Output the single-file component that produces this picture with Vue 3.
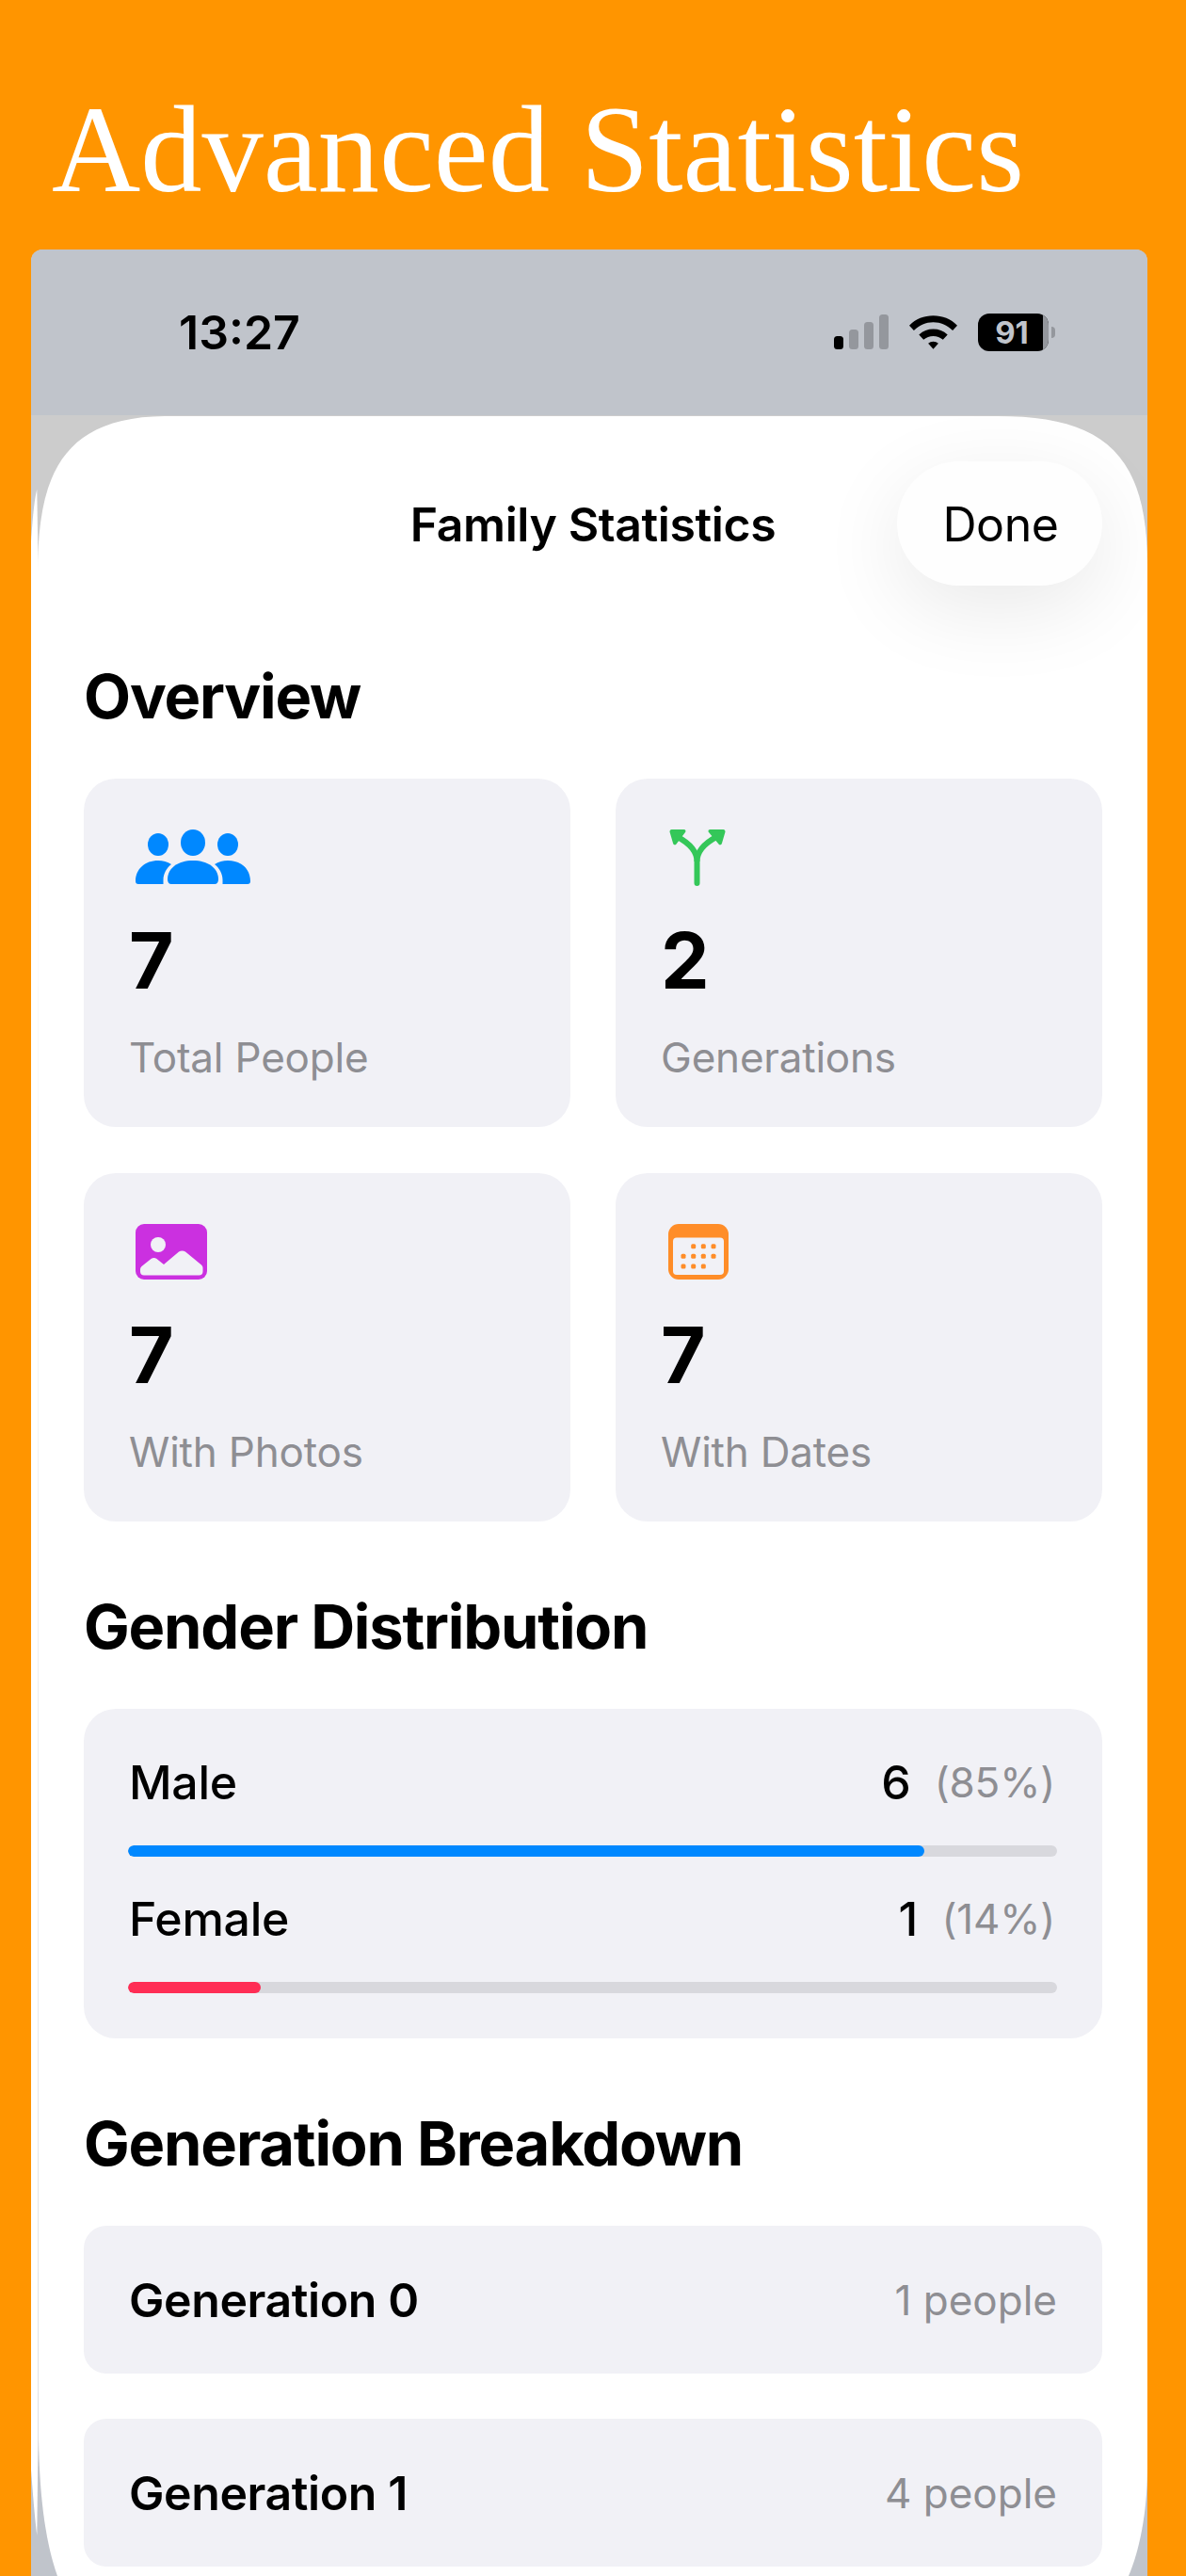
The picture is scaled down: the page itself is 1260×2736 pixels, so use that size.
<template>
  <div class="page">
    <h1 class="title">Advanced Statistics</h1>
    <div class="phone">
      <div class="status">
        <span class="time">13:27</span>
        <div class="status_icons">
          <svg width="58" height="38" viewBox="0 0 58 38">
            <rect x="0" y="23" width="10" height="14" rx="3.5" fill="#000" />
            <rect x="16" y="16" width="10" height="21" rx="3.5" fill="#94979d" />
            <rect x="32" y="8" width="10" height="29" rx="3.5" fill="#94979d" />
            <rect x="48" y="0" width="10" height="37" rx="3.5" fill="#94979d" />
          </svg>
          <svg width="51" height="38" viewBox="0 0 52 38">
            <path d="M0 11.5C7 4.5 16 1 26 1s19 3.5 26 10.5l-5 5.5C41 11 34 8 26 8S11 11 5 17z" fill="#000" />
            <path d="M10.5 21.5C15 17.5 20 15.5 26 15.5s11 2 15.5 6l-5 5.5C33.5 24.5 30 23 26 23s-7.5 1.500-10.500 4z" fill="#000" />
            <path d="M20.5 31C22 29.800 24 29 26 29s4 .8 5.5 2L26 37z" fill="#000" />
          </svg>
          <div class="battery">
            <div class="battery_body">
              <span class="battery_level">91</span>
              <span class="battery_rest"></span>
            </div>
            <span class="battery_cap"></span>
          </div>
        </div>
      </div>

      <!-- sheet outline, with the doubled edge on the left -->
      <svg class="sheet_shape" width="1186" height="2471" viewBox="33 265 1186 2471">
        <path
          d="M40 610C40 510 62 443 175 442H1060C1170 442 1219 480 1219 600V2620C1219 2670 1210 2710 1199 2736H61C50 2705 42 2660 41 2590z"
          fill="#fff"
        />
        <path d="M39.3 520C37 528 35 545 33 575V2623C35 2650 37 2675 39.3 2693L40.5 2590V600z" fill="#fff" />
      </svg>

      <div class="sheet">
        <div class="sheet_head">
          <span class="sheet_title">Family Statistics</span>
          <button class="done">Done</button>
        </div>

        <h2 class="section first">Overview</h2>
        <div class="stat_grid">
          <div class="stat_card" v-for="item in stats" :key="item.label">
            <div class="stat_icon">
              <svg v-if="item.icon === 'people'" width="122" height="58" viewBox="0 0 122 58">
                <ellipse cx="24" cy="16" rx="11" ry="12" fill="#0088ff" />
                <ellipse cx="98" cy="16" rx="11" ry="12" fill="#0088ff" />
                <path d="M0 55C0 42 10 33 24 33c5 0 10 1.2 14 4-5 4-8.5 10-8.5 16.5V58H3c-2 0-3-1-3-3z" fill="#0088ff" />
                <path d="M122 55c0-13-10-22-24-22-5 0-10 1.2-14 4 5 4 8.5 10 8.5 16.5V58H119c2 0 3-1 3-3z" fill="#0088ff" />
                <ellipse cx="61" cy="14" rx="13" ry="14" fill="#0088ff" />
                <path d="M34 53c0-12 11-20 27-20s27 8 27 20c0 3-1.5 5-4 5H38c-2.5 0-4-2-4-5z" fill="#0088ff" />
              </svg>
              <svg v-else-if="item.icon === 'branch'" class="ic_branch" width="60" height="60" viewBox="0 0 60 60">
                <path d="M29.5 57V34C29.5 24 22 15 9 8" fill="none" stroke="#34c759" stroke-width="6" stroke-linecap="round" />
                <path d="M29.5 34C29.5 24 37 15 50 8" fill="none" stroke="#34c759" stroke-width="6" />
                <path d="M0.5 2.5c0-1.500.8-2.500 2-2.500h13c2 0 2.500 2 1.500 3L7.500 15.500c-1 1.500-3 1-3.500-1z" fill="#34c759" />
                <path d="M59.5 2.5c0-1.500-.8-2.500-2-2.500h-14c-2 0-2.500 2-1.500 3L52.500 15.500c1 1.500 3 1 3.500-1z" fill="#34c759" />
              </svg>
              <svg v-else-if="item.icon === 'photo'" width="76" height="59" viewBox="0 0 76 59">
                <rect width="76" height="59" rx="9" fill="#cb30e0" />
                <circle cx="24" cy="22" r="8" fill="#f1f1f6" />
                <path d="M5 48c0-1 .5-2 1.5-3l10-8c2-1.5 4-1.5 6 0l7.5 6 16-13.5c2-1.500 5-1.500 7 0l17 14c1 1 1.5 2 1.5 3v4c0 2.5-1.5 4-4 4H9c-2.5 0-4-1.5-4-4z" fill="#f1f1f6" />
              </svg>
              <svg v-else class="ic_cal" width="64" height="59" viewBox="0 0 64 59">
                <rect width="64" height="59" rx="11" fill="#ff8d28" />
                <rect x="5" y="14.5" width="54" height="39.5" rx="4" fill="#f1f1f6" />
                <g fill="#ff8d28">
                  <rect v-for="(d, i) in calendarDots" :key="i" :x="d[0]" :y="d[1]" width="5" height="5" rx="1.5" />
                </g>
              </svg>
            </div>
            <div class="stat_value">{{ item.value }}</div>
            <div class="stat_label">{{ item.label }}</div>
          </div>
        </div>

        <h2 class="section">Gender Distribution</h2>
        <div class="gender_card">
          <div class="gender" v-for="g in genders" :key="g.name">
            <div class="gender_row">
              <span class="gender_name">{{ g.name }}</span>
              <span class="gender_count">{{ g.count }}</span>
              <span class="gender_pct">({{ g.pct }}%)</span>
            </div>
            <div class="track">
              <div class="fill" :style="{ width: g.bar + '%', background: g.color }"></div>
            </div>
          </div>
        </div>

        <h2 class="section">Generation Breakdown</h2>
        <div class="gen_list">
          <div class="gen_row" v-for="g in generations" :key="g.name">
            <span class="gen_name">{{ g.name }}</span>
            <span class="gen_count">{{ g.count }} people</span>
          </div>
        </div>
      </div>
    </div>
  </div>
</template>

<script setup>
const stats = [
  { icon: "people", value: 7, label: "Total People" },
  { icon: "branch", value: 2, label: "Generations" },
  { icon: "photo", value: 7, label: "With Photos" },
  { icon: "calendar", value: 7, label: "With Dates" },
];
const genders = [
  { name: "Male", count: 6, pct: 85, bar: 85.7, color: "#0088ff" },
  { name: "Female", count: 1, pct: 14, bar: 14.3, color: "#ff2d55" },
];
const generations = [
  { name: "Generation 0", count: 1 },
  { name: "Generation 1", count: 4 },
];
const calendarDots = [
  [24.2, 21.2], [34.8, 21.2], [45.5, 21.2],
  [13.5, 31.8], [24.2, 31.8], [34.8, 31.8], [45.5, 31.8],
  [13.5, 42.5], [24.2, 42.5], [34.8, 42.5],
];
</script>

<style>
html,
body {
  margin: 0;
  background: #ff9500;
}
</style>

<style scoped>
.page {
  width: 1260px;
  height: 2736px;
  overflow: hidden;
  background: #ff9500;
  font-family: Inter, "Noto Sans", sans-serif;
  color: #000;
}
.title {
  margin: 0;
  padding: 86px 0 0 55px;
  height: 265px;
  box-sizing: border-box;
  font-family: "Liberation Serif", serif;
  font-weight: 400;
  font-size: 130.5px;
  line-height: 146px;
  color: #fff;
  white-space: nowrap;
}
.phone {
  position: relative;
  margin: 0 41px 0 33px;
  height: 2471px;
  overflow: hidden;
  border-radius: 12px 12px 0 0;
  background: linear-gradient(#cccccc 0, #cccccc 900px, #c0c4cb 2300px);
}
.status {
  height: 176px;
  box-sizing: border-box;
  background: #c0c4cb;
  display: flex;
  justify-content: space-between;
  align-items: center;
  padding: 0 98px 0 157px;
}
.time {
  font-size: 50px;
  font-weight: 600;
}
.status_icons {
  display: flex;
  align-items: center;
  gap: 22px;
}
.battery {
  display: flex;
  align-items: center;
  gap: 3px;
}
.battery_body {
  width: 75px;
  height: 40px;
  border-radius: 12px;
  overflow: hidden;
  background: #000;
  display: flex;
}
.battery_level {
  flex: 1;
  padding-left: 3px;
  text-align: center;
  font-size: 33px;
  line-height: 40px;
  font-weight: 700;
  color: #c0c4cb;
}
.battery_rest {
  width: 6px;
  background: #94979d;
}
.battery_cap {
  width: 4px;
  height: 12px;
  border-radius: 0 6px 6px 0;
  background: #94979d;
}
.sheet_shape {
  position: absolute;
  top: 0;
  left: 0;
}
.sheet {
  position: relative;
  padding: 0 48px 0 56px;
}
.sheet_head {
  height: 240px;
  position: relative;
  display: flex;
  justify-content: center;
  align-items: center;
}
.sheet_title {
  font-size: 50px;
  font-weight: 600;
  letter-spacing: -0.4px;
  margin-top: -8px;
}
.done {
  position: absolute;
  right: 0;
  top: 49px;
  width: 218px;
  height: 132px;
  border: none;
  border-radius: 66px;
  background: #fefefe;
  box-shadow: 0 24px 90px rgba(0, 0, 0, 0.09);
  font-family: inherit;
  font-size: 50px;
  font-weight: 400;
  letter-spacing: -0.4px;
  color: #000;
  padding: 2px 0 0 2px;
}
.section {
  margin: 0;
  font-size: 65px;
  line-height: 80px;
  font-weight: 700;
  letter-spacing: -1.2px;
  padding: 72px 0 47px;
}
.section.first {
  padding: 19px 0 47px;
}
.stat_grid {
  display: grid;
  grid-template-columns: 517px 517px;
  column-gap: 48px;
  row-gap: 49px;
}
.stat_card {
  height: 370px;
  box-sizing: border-box;
  background: #f1f1f6;
  border-radius: 34px;
  padding: 54px 0 0 48px;
}
.stat_icon {
  height: 62px;
  margin-left: 7px;
  display: flex;
  align-items: flex-start;
}
.ic_branch {
  margin-left: 2px;
}
.ic_cal {
  margin-left: 1px;
}
.stat_value {
  margin-top: 28px;
  font-size: 82px;
  line-height: 100px;
  font-weight: 700;
}
.stat_label {
  margin-top: 24px;
  font-size: 44px;
  line-height: 56px;
  letter-spacing: -0.2px;
  color: #8e8e93;
}
.gender_card {
  height: 350px;
  box-sizing: border-box;
  background: #f1f1f6;
  border-radius: 34px;
  padding: 50px 48px 0;
  display: flex;
  flex-direction: column;
  gap: 38px;
}
.gender_row {
  height: 56px;
  display: flex;
  align-items: center;
}
.gender_name {
  flex: 1;
  font-size: 50px;
  font-weight: 500;
  letter-spacing: -0.3px;
}
.gender_count {
  font-size: 50px;
  font-weight: 500;
}
.gender_pct {
  margin-left: 25px;
  margin-right: 2px;
  font-size: 44px;
  letter-spacing: -0.2px;
  color: #8e8e93;
}
.track {
  margin: 39px 0 0 -1px;
  height: 12px;
  border-radius: 6px;
  background: #d8d8dd;
  overflow: hidden;
}
.fill {
  height: 100%;
  border-radius: 6px;
}
.gen_list {
  display: flex;
  flex-direction: column;
  gap: 48px;
}
.gen_row {
  height: 157px;
  box-sizing: border-box;
  background: #f1f1f6;
  border-radius: 24px;
  padding: 0 48px;
  display: flex;
  justify-content: space-between;
  align-items: center;
}
.gen_name {
  font-size: 50px;
  font-weight: 600;
  letter-spacing: -0.4px;
}
.gen_count {
  font-size: 44px;
  color: #8e8e93;
}
</style>
